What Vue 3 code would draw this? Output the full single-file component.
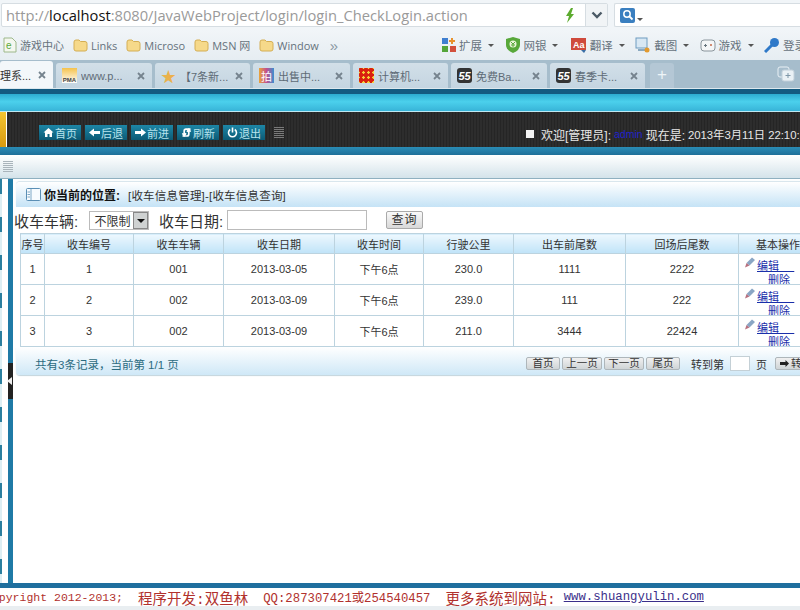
<script setup>
const tabs = [
  { label: '理系...', icon: 'none', w: 53, active: true },
  { label: 'www.p...', icon: 'pma', w: 96 },
  { label: '【7条新...', icon: 'star', w: 95 },
  { label: '出售中...', icon: 'pai', w: 97 },
  { label: '计算机...', icon: 'red', w: 95 },
  { label: '免费Ba...', icon: 'five', w: 96 },
  { label: '春季卡...', icon: 'five', w: 95 },
]
const bookmarks = ['Links', 'Microso', 'MSN 网', 'Window']
const tools = [
  { label: '扩展', icon: 'ext' },
  { label: '网银', icon: 'bank' },
  { label: '翻译', icon: 'trans' },
  { label: '截图', icon: 'shot' },
  { label: '游戏', icon: 'game' },
]
const navButtons = [
  { label: '首页', icon: 'home' },
  { label: '后退', icon: 'back' },
  { label: '前进', icon: 'next' },
  { label: '刷新', icon: 'refresh' },
  { label: '退出', icon: 'power' },
]
const columns = ['序号', '收车编号', '收车车辆', '收车日期', '收车时间', '行驶公里', '出车前尾数', '回场后尾数', '基本操作']
const rows = [
  ['1', '1', '001', '2013-03-05', '下午6点', '230.0', '1111', '2222'],
  ['2', '2', '002', '2013-03-09', '下午6点', '239.0', '111', '222'],
  ['3', '3', '002', '2013-03-09', '下午6点', '211.0', '3444', '22424'],
]
</script>

<template>
  <div class="page">
    <div class="address-row">
      <div class="url-box">
        <span class="url"><span class="dim">http://</span><b>localhost</b><span class="dim">:8080/JavaWebProject/login/login_CheckLogin.action</span></span>
        <svg class="bolt" width="12" height="15" viewBox="0 0 12 15"><path d="M7 0 2 8h3l-2 7 7-9H7l2-6z" fill="#5cab2e" /></svg>
        <span class="url-drop">
          <svg width="12" height="8" viewBox="0 0 12 8"><path d="M1.5 1.5 6 6l4.500-4.500" fill="none" stroke="#4c5a66" stroke-width="2.400" /></svg>
        </span>
      </div>
      <div class="search-box">
        <span class="search-icon">
          <svg width="12" height="12" viewBox="0 0 12 12"><circle cx="5" cy="5" r="3.200" fill="none" stroke="#fff" stroke-width="1.500" /><path d="m7.500 7.500 3 3" stroke="#fff" stroke-width="1.800" /></svg>
        </span>
        <i class="caret small"></i>
      </div>
    </div>

    <div class="bookmark-row">
      <div class="marks">
        <span class="mark">
          <svg width="14" height="16" viewBox="0 0 14 16"><path d="M1 1h8l4 4v10H1z" fill="#f4f7ef" stroke="#9db88a" /><text x="3" y="12" font-size="10" fill="#5aa83a" font-family="Liberation Sans">e</text></svg>
          游戏中心
        </span>
        <span v-for="name in bookmarks" :key="name" class="mark">
          <svg width="15" height="13" viewBox="0 0 15 13"><path d="M1 3q0-2 2-2h3l1.500 1.500H12q2 0 2 2V10q0 2-2 2H3q-2 0-2-2z" fill="#f6d98a" stroke="#d4ae54" /></svg>
          {{ name }}
        </span>
        <span class="more">»</span>
      </div>
      <div class="tools">
        <span v-for="tool in tools" :key="tool.label" class="tool">
          <svg v-if="tool.icon === 'ext'" width="14" height="14" viewBox="0 0 14 14"><rect width="6" height="6" fill="#3f7fd0" /><path d="M10 0v6M7 3h6" stroke="#e8912c" stroke-width="2" /><rect y="8" width="6" height="6" fill="#53a53a" /><rect x="8" y="8" width="6" height="6" fill="#d2503c" /></svg>
          <svg v-else-if="tool.icon === 'bank'" width="14" height="16" viewBox="0 0 14 16"><path d="M7 0 14 2v6q0 5-7 8-7-3-7-8V2z" fill="#58a83a" /><circle cx="7" cy="7" r="3.500" fill="#e9f5d8" /><path d="M5 5l2 2 2-2M7 7v3M5 8h4" stroke="#58a83a" fill="none" /></svg>
          <svg v-else-if="tool.icon === 'trans'" width="16" height="15" viewBox="0 0 16 15"><rect width="15" height="12" fill="#cf4a3c" /><text x="2" y="10" font-size="9" font-weight="700" fill="#fff" font-family="Liberation Sans">Aa</text><path d="M10 12h5l-2 3z" fill="#3a6ea5" /></svg>
          <svg v-else-if="tool.icon === 'shot'" width="16" height="16" viewBox="0 0 16 16"><rect x="1" y="1" width="11" height="10" fill="#d8e8f4" stroke="#6e9cc0" /><path d="M3 13h8" stroke="#8aa9c0" stroke-width="2" /><circle cx="12" cy="13" r="2.500" fill="#e39a2e" /></svg>
          <svg v-else width="16" height="13" viewBox="0 0 16 13"><rect x="1" y="1" width="14" height="11" rx="3" fill="#f4f6f7" stroke="#8a959c" /><path d="M4 6.500h3M5.500 5v3" stroke="#68757d" /><circle cx="11" cy="6" r="1" fill="#c56a4a" /></svg>
          <span class="tool-text">{{ tool.label }}</span>
          <i class="caret"></i>
        </span>
        <span class="tool login">
          <svg width="16" height="16" viewBox="0 0 16 16"><circle cx="10.500" cy="5.500" r="4.500" fill="#2f79c8" /><path d="M8 8 1 15" stroke="#2f79c8" stroke-width="3" /></svg>
          <span class="tool-text">登录</span>
        </span>
      </div>
    </div>

    <div class="tab-row">
      <div v-for="tab in tabs" :key="tab.label + tab.w" class="tab" :class="{ active: tab.active }" :style="{ width: tab.w + 'px' }">
        <span v-if="tab.icon === 'pma'" class="favicon pma">PMA</span>
        <span v-else-if="tab.icon === 'star'" class="favicon star">★</span>
        <span v-else-if="tab.icon === 'pai'" class="favicon pai">拍</span>
        <span v-else-if="tab.icon === 'red'" class="favicon red"></span>
        <span v-else-if="tab.icon === 'five'" class="favicon five">55</span>
        <span class="tab-text">{{ tab.label }}</span>
        <svg class="tab-close" width="8" height="8" viewBox="0 0 8 8"><path d="m1 1 6 6M7 1 1 7" stroke="#75838e" stroke-width="1.800" /></svg>
      </div>
      <div class="tab-new">+</div>
      <div class="tab-spacer"></div>
      <svg class="tab-restore" width="18" height="16" viewBox="0 0 18 16"><rect x="1" y="1" width="11" height="10" rx="2" fill="none" stroke="#e8f0f5" /><rect x="5" y="4" width="12" height="11" rx="2" fill="#eaf1f5" stroke="#c2d0da" /><path d="M11 7v5M8.500 9.500h5" stroke="#7f97a8" /></svg>
    </div>

    <div class="app-top"></div>
    <div class="app-header">
      <div class="logo-tip"></div>
      <div class="nav">
        <span v-for="btn in navButtons" :key="btn.label" class="nav-btn">
          <svg width="11" height="11" viewBox="0 0 11 11">
            <path v-if="btn.icon === 'home'" d="M5.500 1 0.500 5.500H2V10h2.500V7h2v3H9V5.500h1.500z" fill="#fff" />
            <path v-else-if="btn.icon === 'back'" d="M0 5.500 5 1.500V4h6v3H5v2.500z" fill="#fff" />
            <path v-else-if="btn.icon === 'next'" d="M11 5.500 6 1.500V4H0v3h6v2.500z" fill="#fff" />
            <g v-else-if="btn.icon === 'refresh'" fill="none" stroke="#fff" stroke-width="1.700"><path d="M9.500 2.200H5Q3.200 2.200 3.200 4v4" /><path d="M1.500 6.200 3.200 8.500 5 6.200" /><path d="M1.500 9H6Q7.800 9 7.800 7V3.500" /><path d="M6 4.800 7.800 2.500 9.500 4.800" /></g>
            <g v-else fill="none" stroke="#fff" stroke-width="1.600"><path d="M3.200 2.500a4 4 0 1 0 4.600 0" /><path d="M5.500 0.500v5" /></g>
          </svg>
          {{ btn.label }}
        </span>
        <span class="grip dark"></span>
      </div>
      <div class="welcome">
        <i class="square"></i>
        <span>欢迎[管理员]:</span>
        <span class="admin">admin</span>
        <span>现在是:</span>
        <span class="clock">2013年3月11日 22:10:</span>
      </div>
    </div>
    <div class="app-band"></div>
    <div class="app-toolbar"><span class="grip"></span></div>

    <div class="app-body">
      <aside class="rail">
        <div class="rail-strip"></div>
        <div class="rail-bar"></div>
        <div class="rail-handle"><i></i></div>
      </aside>
      <main class="content">
        <div class="panel">
          <div class="crumb">
            <svg width="15" height="13" viewBox="0 0 15 13"><rect x="0.500" y="0.500" width="14" height="12" rx="1" fill="#f7fbfe" stroke="#5b8fb5" /><path d="M5 1v11M1.500 4H4M1.500 6.500H4M1.500 9H4" stroke="#7ea8c6" /></svg>
            <b>你当前的位置:</b>
            <span>[收车信息管理]-[收车信息查询]</span>
          </div>
          <div class="query">
            <label class="query-label first">收车车辆:</label>
            <span class="select">不限制<i class="select-arrow"></i></span>
            <label class="query-label second">收车日期:</label>
            <span class="date-input"></span>
            <span class="query-btn">查询</span>
          </div>
          <table class="grid">
            <colgroup>
              <col style="width: 24px" /><col style="width: 89px" /><col style="width: 90px" /><col style="width: 111px" />
              <col style="width: 89px" /><col style="width: 90px" /><col style="width: 112px" /><col style="width: 113px" /><col style="width: 79px" />
            </colgroup>
            <thead>
              <tr><th v-for="col in columns" :key="col">{{ col }}</th></tr>
            </thead>
            <tbody>
              <tr v-for="row in rows" :key="row[0]">
                <td v-for="(cell, i) in row" :key="i">{{ cell }}</td>
                <td class="ops">
                  <div class="ops-inner">
                    <svg class="pencil" width="12" height="11" viewBox="0 0 12 11"><path d="M2.500 6 8 0.500l3 2.500-5.500 5.500z" fill="#8aa6c4" /><path d="M2.500 6 1 10.500l4.500-2z" fill="#b76f7e" /></svg>
                    <a class="op-edit">编辑&nbsp;&nbsp;&nbsp;&nbsp;&nbsp;</a>
                    <a class="op-del">删除</a>
                  </div>
                </td>
              </tr>
            </tbody>
          </table>
          <div class="pager">
            <span class="count">共有3条记录，当前第 1/1 页</span>
            <div class="pager-right">
              <span class="page-btn">首页</span>
              <span class="page-btn wide">上一页</span>
              <span class="page-btn wide">下一页</span>
              <span class="page-btn">尾页</span>
              <span class="goto">转到第</span>
              <span class="page-input"></span>
              <span class="goto-end">页</span>
              <span class="page-btn go">
                <svg width="9" height="7" viewBox="0 0 9 7"><path d="M9 3.500 5.500 0v2H0v3h5.500v2z" fill="#222" /></svg>
                转到
              </span>
            </div>
          </div>
        </div>
      </main>
    </div>

    <div class="bottom-line"></div>
    <div class="footer">
      <span class="mono copy">Copyright 2012-2013;</span>
      <span class="cn">程序开发:双鱼林</span>
      <span class="mono">QQ:287307421或254540457</span>
      <span class="cn">更多系统到网站:</span>
      <a class="mono link">www.shuangyulin.com</a>
    </div>
  </div>
</template>

<style scoped>
.page {
  width: 800px;
  height: 610px;
  overflow: hidden;
  background: #fff;
  color: #333;
  font-family: "Liberation Sans", "Noto Sans CJK SC", sans-serif;
  font-size: 12px;
  display: flex;
  flex-direction: column;
}

/* browser chrome */
.address-row {
  height: 30px;
  flex: none;
  display: flex;
  gap: 6px;
  padding: 3px 0 0;
  box-sizing: border-box;
  background: #f1f5f8;
}
.url-box {
  width: 607px;
  margin-left: 1px;
  height: 24px;
  flex: none;
  display: flex;
  align-items: center;
  box-sizing: border-box;
  background: #fff;
  border: 1px solid #d6dde2;
  border-radius: 2px;
}
.url {
  flex: 1;
  padding-left: 4px;
  font-size: 14.700px;
  font-family: "Open Sans", "Liberation Sans", sans-serif;
  white-space: nowrap;
  color: #222;
}
.url .dim {
  color: #9a9a9a;
}
.url b {
  font-weight: 400;
  color: #111;
}
.bolt {
  margin-right: 9px;
}
.url-drop {
  width: 21px;
  height: 22px;
  display: flex;
  align-items: center;
  justify-content: center;
  border-left: 1px solid #d6dde2;
  background: #f1f4f6;
}
.search-box {
  flex: 1;
  height: 24px;
  display: flex;
  align-items: center;
  gap: 2px;
  box-sizing: border-box;
  padding-left: 5px;
  background: #fff;
  border: 1px solid #d6dde2;
  border-right: 0;
  border-radius: 2px 0 0 2px;
}
.search-icon {
  width: 15px;
  height: 15px;
  display: flex;
  align-items: center;
  justify-content: center;
  background: #3a7fc0;
  border-radius: 2px;
}
.caret {
  width: 0;
  height: 0;
  border: 3px solid transparent;
  border-top: 3px solid #555;
  border-bottom: 0;
  margin-left: 3px;
}
.caret.small {
  margin: 8px 0 0;
}

.bookmark-row {
  height: 30px;
  flex: none;
  display: flex;
  justify-content: space-between;
  align-items: center;
  overflow: hidden;
  background: linear-gradient(#f1f5f8, #e6edf2);
  color: #66727c;
}
.marks {
  display: flex;
  align-items: center;
  gap: 9px;
  padding-left: 3px;
  white-space: nowrap;
}
.mark {
  display: flex;
  align-items: center;
  gap: 3px;
  font-family: "Open Sans", "Noto Sans CJK SC", sans-serif;
  font-size: 11px;
}
.more {
  font-size: 15px;
  margin-left: 2px;
  color: #8a98a3;
}
.tools {
  display: flex;
  align-items: center;
  width: 370px;
  flex: none;
  padding-left: 12px;
  box-sizing: border-box;
  white-space: nowrap;
}
.tool {
  width: 64.400px;
  flex: none;
  display: flex;
  align-items: center;
  gap: 3px;
}
.tool-text {
  font-size: 11.500px;
}

.tab-row {
  height: 29px;
  flex: none;
  display: flex;
  align-items: flex-end;
  gap: 3px;
  background: #a6bdcc;
  border-bottom: 1px solid #dde8ee;
  box-sizing: border-box;
  overflow: hidden;
}
.tab {
  height: 25px;
  flex: none;
  display: flex;
  align-items: center;
  gap: 4px;
  padding: 0 7px 0 6px;
  box-sizing: border-box;
  background: linear-gradient(#d2dfe8, #c4d5e1);
  border-radius: 3px 3px 0 0;
  color: #5e6b76;
  font-size: 11px;
  white-space: nowrap;
}
.tab.active {
  padding-left: 0;
  height: 27px;
  background: #f3f7fa;
  color: #333;
}
.tab-text {
  flex: 1;
  overflow: hidden;
}
.tab-close {
  flex: none;
}
.favicon {
  width: 15px;
  height: 15px;
  flex: none;
  display: flex;
  align-items: center;
  justify-content: center;
  overflow: hidden;
}
.pma {
  font-size: 6px;
  font-weight: 700;
  color: #444;
  align-items: flex-end;
  background: linear-gradient(#f5c24c, #fff);
}
.star {
  font-size: 15px;
  color: #eab14c;
}
.pai {
  font-size: 11px;
  color: #fff;
  background: linear-gradient(90deg, #e9a53a, #c34f8e, #3d8fd0);
}
.red {
  background:
    radial-gradient(circle, #f4d43c 1px, transparent 1.500px) 2px 2px / 5px 5px,
    #d9200f;
}
.five {
  font-size: 11px;
  font-weight: 700;
  font-style: italic;
  color: #fff;
  background: #333;
  border-radius: 3px;
}
.tab-new {
  width: 24px;
  height: 25px;
  margin-left: 2px;
  flex: none;
  text-align: center;
  font-size: 17px;
  line-height: 24px;
  color: #eef4f7;
  background: #b4c7d5;
  border-radius: 3px 3px 0 0;
}
.tab-spacer {
  flex: 1;
}
.tab-restore {
  align-self: center;
  margin-right: 5px;
}

/* app frame */
.app-top {
  height: 23px;
  flex: none;
  border-top: 5px solid #135a80;
  border-bottom: 1px solid #bfe9f3;
  box-sizing: border-box;
  background: linear-gradient(#2cabd0, #4bd0ec 45%, #38b4d8);
}
.app-header {
  height: 35px;
  flex: none;
  display: flex;
  align-items: center;
  color: #e8e8e8;
  background: #2b2b2b;
  background-image: repeating-linear-gradient(90deg, #2d2d2d 0 2px, #252525 2px 3px);
}
.logo-tip {
  width: 6px;
  height: 35px;
  flex: none;
  background: linear-gradient(#f4c531, #d89a10);
  border-right: 1px solid #fff;
}
.nav {
  margin-left: 32px;
  padding-top: 6px;
  display: flex;
  align-items: center;
  gap: 4px;
}
.nav-btn {
  width: 42px;
  height: 15px;
  display: flex;
  align-items: center;
  justify-content: center;
  gap: 1px;
  font-size: 11px;
  color: #b8e4ee;
  background: linear-gradient(#1d86a6, #0c5a75);
}
.grip {
  width: 10px;
  height: 11px;
  display: block;
  background: repeating-linear-gradient(#a9b4bb 0 1px, transparent 1px 2px);
}
.grip.dark {
  margin-left: 5px;
  background: repeating-linear-gradient(#7a7a7a 0 1px, transparent 1px 2px);
}
.welcome {
  margin-left: auto;
  width: 274px;
  flex: none;
  display: flex;
  align-items: center;
  gap: 3px;
  font-size: 12px;
  white-space: nowrap;
  padding-top: 9px;
}
.square {
  width: 8px;
  height: 8px;
  margin-right: 4px;
  background: #f4f4f4;
}
.admin {
  color: #2222cc;
  font-size: 10.500px;
}
.clock {
  font-size: 11.300px;
}
.app-band {
  height: 8px;
  flex: none;
  background: linear-gradient(#2a8db6, #1f6f99);
}
.app-toolbar {
  height: 24px;
  flex: none;
  display: flex;
  align-items: center;
  padding-left: 3px;
  box-sizing: border-box;
  background: linear-gradient(#fff, #d4e3ea);
  border-bottom: 1px solid #8fb0c0;
}

.app-body {
  flex: 1;
  min-height: 0;
  display: flex;
}
.rail {
  width: 13px;
  flex: none;
  display: flex;
  position: relative;
}
.rail-strip {
  width: 8px;
  background:
    repeating-linear-gradient(#2a7f9f 0 15px, #dceef3 15px 38px) 0 0 / 2px 100% no-repeat,
    #fff;
}
.rail-bar {
  width: 5px;
  background: #1f7aa6;
}
.rail-handle {
  position: absolute;
  left: 8px;
  top: 184px;
  width: 5px;
  height: 36px;
  background: #222;
}
.rail-handle i {
  position: absolute;
  left: -1px;
  top: 14px;
  border: 4px solid transparent;
  border-right: 5px solid #eee;
  border-left: 0;
}
.content {
  flex: 1;
  min-width: 0;
  padding-top: 3px;
  overflow: hidden;
}
.panel {
  width: 800px;
  margin-left: 3px;
  background: #fff;
}
.crumb {
  height: 25px;
  display: flex;
  align-items: center;
  gap: 3px;
  padding-left: 10px;
  box-sizing: border-box;
  font-size: 11.500px;
  letter-spacing: 0.2px;
  color: #333;
  background: linear-gradient(#fff, #c5e3f6);
  border-radius: 4px 0 0 0;
  box-shadow: 0 -1px 1px #d5e4ec;
}
.crumb b {
  font-size: 12px;
  letter-spacing: 0;
  color: #111;
}
.crumb span {
  margin-left: 5px;
}
.query {
  height: 26px;
  margin-left: -2px;
  display: flex;
  align-items: center;
  font-size: 15px;
  color: #333;
  white-space: nowrap;
}
.query-label.first {
  width: 74.500px;
  flex: none;
}
.query-label.second {
  width: 67.500px;
  flex: none;
  margin-left: 10px;
}
.select {
  width: 60.500px;
  height: 19px;
  flex: none;
  display: flex;
  align-items: center;
  justify-content: space-between;
  padding-left: 5px;
  box-sizing: border-box;
  border: 1px solid #bbb;
  font-size: 12px;
}
.select-arrow {
  width: 15px;
  height: 17px;
  position: relative;
  background: #cfd2d2;
  box-shadow: inset 0 0 0 1px #888;
}
.select-arrow::after {
  content: "";
  position: absolute;
  left: 4px;
  top: 7px;
  border: 4px solid transparent;
  border-top: 4px solid #111;
  border-bottom: 0;
}
.date-input {
  width: 140px;
  height: 20px;
  flex: none;
  box-sizing: border-box;
  border: 1px solid #bbb;
}
.query-btn {
  width: 37px;
  height: 18px;
  flex: none;
  margin-left: 19.500px;
  box-sizing: border-box;
  text-align: center;
  line-height: 16px;
  font-size: 12px;
  letter-spacing: 1px;
  border: 1px solid #aaa;
  border-radius: 2px;
  background: linear-gradient(#fafafa, #d8d8d8);
}
.grid {
  width: 797px;
  margin-left: 4px;
  border-collapse: collapse;
  table-layout: fixed;
}
.grid th,
.grid td {
  border: 1px solid #bcd3df;
  text-align: center;
  overflow: hidden;
  white-space: nowrap;
  padding: 0;
}
.grid th {
  height: 19px;
  font-weight: 400;
  font-size: 11px;
  color: #333;
  background: linear-gradient(#eef8fe, #bfe3f8);
}
.grid tbody tr {
  height: 31px;
}
.grid td {
  font-size: 11px;
  color: #333;
}
.grid td.ops {
  text-align: left;
  vertical-align: top;
}
.ops-inner {
  position: relative;
  height: 30px;
  padding: 6px 0 0 18px;
  box-sizing: border-box;
  line-height: 13.500px;
}
.pencil {
  position: absolute;
  left: 5px;
  top: 3px;
}
.ops a {
  display: block;
  color: #1a2faa;
  text-decoration: underline;
}
.op-del {
  margin-left: 11px;
}
.pager {
  height: 28px;
  display: flex;
  align-items: center;
  padding: 5px 0 0 19px;
  box-sizing: border-box;
  background: linear-gradient(#fff, #cfe8f7);
  border-radius: 0 0 0 4px;
  box-shadow: 0 1px 1px #c3d4dc;
  white-space: nowrap;
}
.count {
  width: 491px;
  flex: none;
  color: #2b6b80;
  font-size: 11.500px;
}
.pager-right {
  display: flex;
  align-items: center;
  gap: 2px;
  color: #333;
}
.page-btn {
  width: 32px;
  height: 11px;
  box-sizing: content-box;
  flex: none;
  text-align: center;
  line-height: 11px;
  font-size: 10.500px;
  border: 1px solid #aeb6ba;
  border-radius: 2px;
  background: linear-gradient(#f0f0f0, #cfd4d6);
}
.page-btn.wide {
  width: 38px;
}
.goto {
  margin: 0 4px 0 9px;
  font-size: 11px;
}
.goto-end {
  margin: 0 6px 0 4px;
  font-size: 11px;
}
.page-input {
  width: 18px;
  height: 13px;
  background: #fff;
  border: 1px solid #c4d0d6;
}
.page-btn.go {
  width: 40px;
  display: flex;
  align-items: center;
  justify-content: center;
  gap: 2px;
}

.bottom-line {
  height: 5px;
  flex: none;
  background: #1f6f9e;
}
.footer {
  height: 22px;
  flex: none;
  display: flex;
  align-items: center;
  gap: 15px;
  margin-left: -15px;
  padding-bottom: 4px;
  box-sizing: border-box;
  color: #b1312d;
  white-space: nowrap;
  background: linear-gradient(#fff 80%, #e9eef1 80%);
}
.cn {
  font-family: "Liberation Mono", "Noto Sans CJK SC", monospace;
  font-size: 14.500px;
}
.mono {
  font-family: "Liberation Mono", "Noto Sans CJK SC", monospace;
  font-size: 12.300px;
}
.mono.copy {
  font-size: 11.500px;
}
.link {
  margin-left: -7px;
  color: #3b2f8a;
  text-decoration: underline;
}
</style>

<style>
html,
body {
  margin: 0;
  background: #fff;
}
</style>
